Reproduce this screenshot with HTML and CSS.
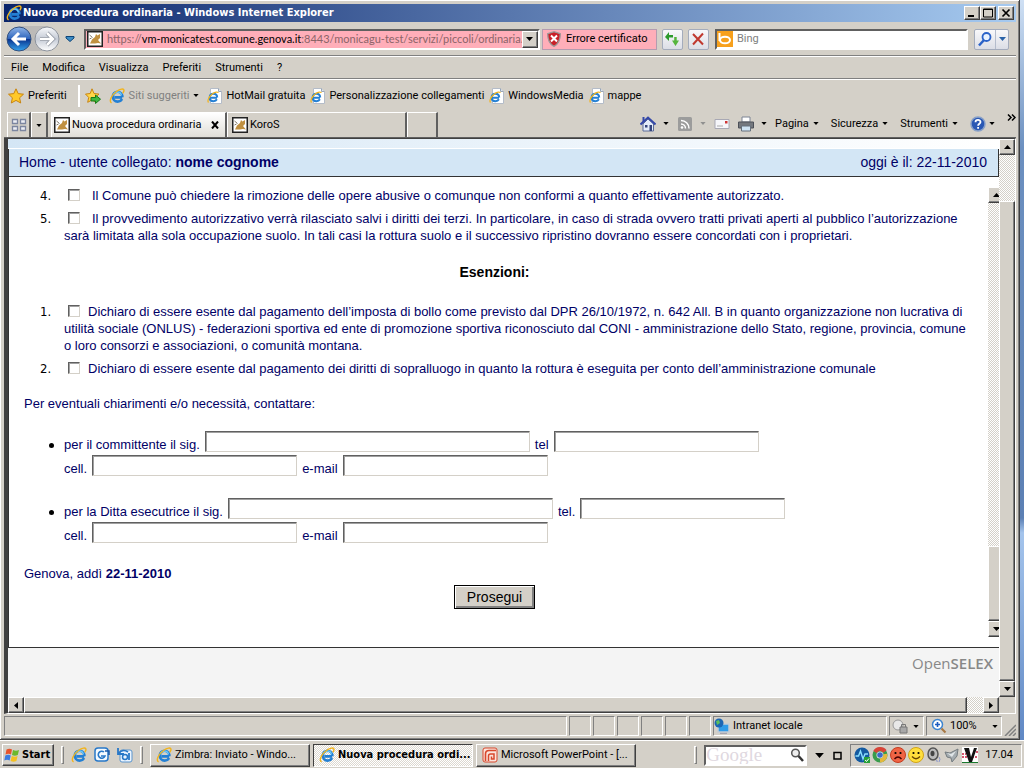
FILE: index.html
```html
<!DOCTYPE html>
<html lang="it">
<head>
<meta charset="utf-8">
<title>Nuova procedura ordinaria</title>
<link rel="stylesheet" href="styles.css">
</head>
<body>
<svg class="defs" aria-hidden="true">
  <symbol id="ie" viewBox="0 0 16 16">
    <path d="M13.200 9.400H5.400M13.400 9.200C13.400 5.900 11.400 3.800 8.600 3.800S3.800 6 3.800 8.700s2 4.900 4.800 4.900c2.100 0 3.600-1 4.400-2.600" fill="none" stroke="#2480d4" stroke-width="2.600"/>
    <path d="M12.400 7.400C12 5.400 10.600 4 8.600 4S5 5.200 4.400 7.200" fill="none" stroke="#6cc8f8" stroke-width="1.400"/>
    <path d="M2.600 14.800C-.6 13.400 2.600 7 7.500 3.500 11 .9 14.800.2 15 2.300c.1 1-.5 2-1.200 2.900" fill="none" stroke="#f2b41c" stroke-width="1.400"/>
  </symbol>
  <symbol id="iepage" viewBox="0 0 16 16">
    <path d="M3.500.5h8l3 3v12h-11z" fill="#fff" stroke="#b4bcc8"/><path d="M11.500.5v3h3" fill="#dde6f0" stroke="#9aa6b4"/>
    <path d="M10 9.700H3.500M10.200 9.500C10.200 7 8.500 5.800 6.400 5.800S2.700 7.300 2.700 9.500s1.500 3.700 3.700 3.700c1.600 0 2.900-.7 3.500-1.900" fill="none" stroke="#2480d4" stroke-width="2"/>
    <path d="M1.500 14.500C0 13 2 8.500 5.500 5.800 8.300 3.800 11 3.400 11.200 5" fill="none" stroke="#f2b41c" stroke-width="1.200"/>
  </symbol>
  <symbol id="cat" viewBox="0 0 16 16">
    <path d="M.75.75h14.500v14.500H.75z" fill="#fff" stroke="#222" stroke-width="1.500"/>
    <path d="M3 12.500l2-4 3-2.500 1-3 1.500 1.500L13 3v4l-2 2 3 3.500-3-.5-3 .5z" fill="#c09040"/><path d="M2.500 4l3 2.500M2.500 8l2-1" stroke="#807868" fill="none"/>
  </symbol>
  <symbol id="down" viewBox="0 0 7 4"><path d="M0 0h7L3.500 4z" fill="currentColor"/></symbol>
</svg>
<div class="desktop">
<div class="window">
  <header class="titlebar">
    <svg class="i16"><use href="#ie"/></svg>
    <h1>Nuova procedura ordinaria - Windows Internet Explorer</h1>
    <div class="winbtns">
      <button class="raised" aria-label="Riduci"><svg viewBox="0 0 12 10"><path d="M2 7h6v2H2z"/></svg></button>
      <button class="raised" aria-label="Ripristina"><svg viewBox="0 0 12 10"><path d="M1.500 1h9v8h-9zM1 1.500h10" fill="none" stroke="#000"/></svg></button>
      <button class="raised close" aria-label="Chiudi"><svg viewBox="0 0 12 10"><path d="M2.500 1.500l7 7m0-7l-7 7" stroke="#000" stroke-width="1.700"/></svg></button>
    </div>
  </header>

  <div class="navrow">
    <div class="backfwd">
      <svg viewBox="0 0 54 28">
        <defs>
          <linearGradient id="gb" x1="0" y1="0" x2="0" y2="1"><stop offset="0" stop-color="#8fb4e8"/><stop offset=".48" stop-color="#2f66bd"/><stop offset=".52" stop-color="#0a3590"/><stop offset="1" stop-color="#35a4ee"/></linearGradient>
          <linearGradient id="gf" x1="0" y1="0" x2="0" y2="1"><stop offset="0" stop-color="#f8f9fb"/><stop offset=".5" stop-color="#c5cbd6"/><stop offset="1" stop-color="#fff"/></linearGradient>
        </defs>
        <path d="M13 1h28a13 13 0 0 1 0 25H13z" fill="#bcbab8"/>
        <circle cx="13" cy="14" r="12" fill="url(#gb)" stroke="#33507e"/>
        <circle cx="41" cy="14" r="12" fill="url(#gf)" stroke="#8c929c"/>
        <path d="M20 14H7m6-6l-6 6 6 6" fill="none" stroke="#fff" stroke-width="3"/>
        <path d="M34 14h13m-6-6l6 6-6 6" fill="none" stroke="#8a909c" stroke-width="4"/>
        <path d="M34 14h13m-6-6l6 6-6 6" fill="none" stroke="#fff" stroke-width="2.500"/>
      </svg>
    </div>
    <svg class="recent" viewBox="0 0 10 6"><path d="M1 .5h8v1.500L5 5.500 1 2z" fill="#3c8cc4" stroke="#0c4478"/></svg>
    <div class="address sunken">
      <svg class="i16"><use href="#cat"/></svg>
      <p>https://<b>vm-monicatest.comune.genova.it</b>:8443/monicagu-test/servizi/piccoli/ordinaria/p</p>
      <button class="raised combo" aria-label="Cronologia indirizzi"><svg class="dn"><use href="#down"/></svg></button>
    </div>
    <button class="cert">
      <svg class="i16" viewBox="0 0 16 16"><path d="M8 .7l6.300 2C14.300 9.500 12 13.300 8 15.300 4 13.300 1.700 9.500 1.700 2.700z" fill="#c91f28" stroke="#9a9a9a" stroke-width="1.300"/><path d="M5 4.500l6 6m0-6l-6 6" stroke="#fff" stroke-width="2"/></svg>
      Errore certificato
    </button>
    <button class="flat" aria-label="Aggiorna"><svg class="i16" viewBox="0 0 16 16"><path d="M1 6l4-5v3h4v2.500H5V10z" fill="#2c9a2c"/><path d="M15 9.500l-3.500 5.500-3.500-5.500h2.200V6h2.500v3.500z" fill="#55b53c"/></svg></button>
    <button class="flat" aria-label="Interrompi"><svg class="i16" viewBox="0 0 16 16"><path d="M3 3l10 10.500M13 2.500L3 13.500" stroke="#c0392f" stroke-width="2"/></svg></button>
    <label class="search sunken">
      <svg class="i16" viewBox="0 0 16 16"><path d="M0 0h16v16H0z" fill="#f7a01c"/><path d="M2.500 2v8" stroke="#fff" stroke-width="2"/><ellipse cx="8" cy="9" rx="5" ry="3.300" fill="none" stroke="#fff" stroke-width="2"/></svg>
      <input type="text" placeholder="Bing" aria-label="Cerca con Bing">
    </label>
    <div class="go">
      <button aria-label="Cerca"><svg class="i16" viewBox="0 0 16 16"><circle cx="9.500" cy="6" r="4" fill="#e8f2ff" stroke="#2a62c8" stroke-width="1.800"/><path d="M7 9l-5 5.500" stroke="#2a62c8" stroke-width="2.500"/></svg></button>
      <button aria-label="Opzioni di ricerca"><svg class="dn blue"><use href="#down"/></svg></button>
    </div>
  </div>

  <nav class="menu">
    <button>File</button><button>Modifica</button><button>Visualizza</button><button>Preferiti</button><button>Strumenti</button><button>?</button>
  </nav>

  <div class="favs">
    <button><svg class="i16" viewBox="0 0 16 16"><path d="M8 .8l2.200 4.800 5.300.6-3.900 3.600 1.100 5.200L8 12.400 3.300 15l1.100-5.200L.5 6.200l5.300-.6z" fill="#ffc928" stroke="#c88410"/></svg>Preferiti</button>
    <i class="vsep"></i>
    <button aria-label="Aggiungi"><svg class="i16" viewBox="0 0 16 16"><path d="M7 .8l2 4.700 5 .6-3.700 3.300 1 4.900L7 12l-4.300 2.300 1-4.900L.5 6.100l4.700-.6z" fill="#ffd648" stroke="#c88410"/><path d="M6 9.500h4.500V7l5 4.200-5 4.300V13H6z" fill="#3fb83f" stroke="#187818"/></svg></button>
    <button class="dim"><svg class="i16"><use href="#ie"/></svg>Siti suggeriti<svg class="dn sm dark"><use href="#down"/></svg></button>
    <a href="#hotmail"><svg class="i16"><use href="#iepage"/></svg>HotMail gratuita</a>
    <a href="#pers"><svg class="i16"><use href="#iepage"/></svg>Personalizzazione collegamenti</a>
    <a href="#media"><svg class="i16"><use href="#iepage"/></svg>WindowsMedia</a>
    <a href="#mappe"><svg class="i16"><use href="#iepage"/></svg>mappe</a>
  </div>

  <div class="tabs">
    <button class="tab quick" aria-label="Schede rapide"><svg class="i16" viewBox="0 0 16 16"><path d="M1.500 2.500h5v4h-5zM9.500 2.500h5v4h-5zM1.500 9.500h5v4h-5zM9.500 9.500h5v4h-5z" fill="#eceef4" stroke="#7c86a0" stroke-width="1.300"/></svg></button>
    <button class="tab drop" aria-label="Elenco schede"><svg class="dn sm"><use href="#down"/></svg></button>
    <div class="tab active"><svg class="i16"><use href="#cat"/></svg><span>Nuova procedura ordinaria</span><button aria-label="Chiudi scheda"><svg viewBox="0 0 8 8"><path d="M1 .5l6 7m0-7l-6 7" stroke="#000" stroke-width="2"/></svg></button></div>
    <div class="tab koros"><svg class="i16"><use href="#cat"/></svg><span>KoroS</span></div>
    <button class="tab new" aria-label="Nuova scheda"></button>
    <div class="cmds">
      <button aria-label="Home" class="ic"><svg class="i16" viewBox="0 0 16 16"><path d="M3 8v7h10.500V8L8 3z" fill="#e4ecfa" stroke="#5c6c98"/><path d="M.5 8.500L8 1.500l7.500 7" fill="none" stroke="#3448a8" stroke-width="2"/><path d="M2.500 1h2v4l-2 1.500z" fill="#3448a8"/><path d="M5 9h2.500v2.500H5zM9.500 9H12v6H9.500z" fill="#34447c"/></svg><svg class="dn sm"><use href="#down"/></svg></button>
      <button aria-label="Feed" class="ic off"><svg class="i16" viewBox="0 0 16 16"><rect x="1" y="1" width="14" height="14" rx="1.500" fill="#9c9c9c"/><path d="M4 8a4.500 4.500 0 0 1 4.500 4.500M4 4.500a8 8 0 0 1 8 8" fill="none" stroke="#fff" stroke-width="1.500"/><circle cx="5" cy="11.500" r="1.300" fill="#fff"/></svg><svg class="dn sm"><use href="#down"/></svg></button>
      <button aria-label="Posta" class="ic"><svg class="i16" viewBox="0 0 16 16"><path d="M1 3.500h14v9H1z" fill="#f6f6fa" stroke="#a8a8b4"/><path d="M11 5h2.500v2.500H11z" fill="#d03434"/><path d="M3 10h6" stroke="#aaa"/></svg></button>
      <button aria-label="Stampa" class="ic"><svg class="i16" viewBox="0 0 16 16"><path d="M4 1h8v5H4z" fill="#fff" stroke="#7c8494"/><path d="M.5 6h15v6H.5z" fill="#74787e" stroke="#4c5058"/><path d="M3.500 10h9v5h-9z" fill="#cfe4f4" stroke="#66707c"/></svg><svg class="dn sm"><use href="#down"/></svg></button>
      <button>Pagina<svg class="dn sm"><use href="#down"/></svg></button>
      <button>Sicurezza<svg class="dn sm"><use href="#down"/></svg></button>
      <button>Strumenti<svg class="dn sm"><use href="#down"/></svg></button>
      <button aria-label="Guida" class="help"><svg class="i16" viewBox="0 0 16 16"><circle cx="8" cy="8" r="7" fill="#2a58b4" stroke="#88a0c8" stroke-width="1.500"/><path d="M5.500 6.200C5.500 3.200 10.500 3.200 10.500 6c0 1.800-2.400 1.800-2.400 3.800M8.100 11v1.800" fill="none" stroke="#fff" stroke-width="1.800"/></svg><svg class="dn sm"><use href="#down"/></svg></button>
      <button class="more" aria-label="Altri comandi"><svg viewBox="0 0 9 7"><path d="M1 .5l3 3-3 3M5 .5l3 3-3 3" fill="none" stroke="#000" stroke-width="1.500"/></svg></button>
    </div>
  </div>

  <div class="view">
    <div class="page">
      <div class="strip"></div>
      <div class="userbar"><p>Home - utente collegato: <strong>nome cognome</strong></p><p>oggi è il: 22-11-2010</p></div>
      <div class="panel">
        <form class="form">
          <ol class="clauses" style="counter-reset:n 3">
            <li><label class="wide"><input type="checkbox">Il Comune può chiedere la rimozione delle opere abusive o comunque non conformi a quanto effettivamente autorizzato.</label></li>
            <li><label class="wide"><input type="checkbox">Il provvedimento autorizzativo verrà rilasciato salvi i diritti dei terzi. In particolare, in caso di strada ovvero tratti privati aperti al pubblico l’autorizzazione<br>sarà limitata alla sola occupazione suolo. In tali casi la rottura suolo e il successivo ripristino dovranno essere concordati con i proprietari.</label></li>
          </ol>
          <h2>Esenzioni:</h2>
          <ol class="clauses" style="counter-reset:n 0">
            <li><label><input type="checkbox">Dichiaro di essere esente dal pagamento dell’imposta di bollo come previsto dal DPR 26/10/1972, n. 642 All. B in quanto organizzazione non lucrativa di<br>utilità sociale (ONLUS) - federazioni sportiva ed ente di promozione sportiva riconosciuto dal CONI - amministrazione dello Stato, regione, provincia, comune<br>o loro consorzi e associazioni, o comunità montana.</label></li>
            <li><label><input type="checkbox">Dichiaro di essere esente dal pagamento dei diritti di sopralluogo in quanto la rottura è eseguita per conto dell’amministrazione comunale</label></li>
          </ol>
          <p class="note">Per eventuali chiarimenti e/o necessità, contattare:</p>
          <ul class="contacts">
            <li>
              <div><label for="c1">per il committente il sig.</label><input id="c1" class="long" type="text"><label for="c2">tel</label><input id="c2" type="text"></div>
              <div><label for="c3">cell.</label><input id="c3" type="text"><label for="c4">e-mail</label><input id="c4" type="text"></div>
            </li>
            <li>
              <div><label for="d1">per la Ditta esecutrice il sig.</label><input id="d1" class="long" type="text"><label for="d2">tel.</label><input id="d2" type="text"></div>
              <div><label for="d3">cell.</label><input id="d3" type="text"><label for="d4">e-mail</label><input id="d4" type="text"></div>
            </li>
          </ul>
          <p class="note">Genova, addì <strong>22-11-2010</strong></p>
          <button type="button" class="submit">Prosegui</button>
        </form>
        <div class="innerscroll">
          <div class="raised sb"><svg class="up" viewBox="0 0 7 4"><path d="M0 4h7L3.500 0z"/></svg></div>
          <div class="track"></div>
          <div class="raised thumb"></div>
          <div class="raised sb"><svg class="up"><use href="#down"/></svg></div>
        </div>
      </div>
      <footer>Open<b>SELEX</b></footer>
    </div>
    <div class="vscroll">
      <div class="raised sb"><svg class="up" viewBox="0 0 7 4"><path d="M0 4h7L3.500 0z"/></svg></div>
      <div class="track"></div>
      <div class="raised thumb"></div>
      <div class="raised sb"><svg class="up"><use href="#down"/></svg></div>
    </div>
    <div class="hscroll">
      <div class="raised sb"><svg class="side" viewBox="0 0 4 7"><path d="M4 0v7L0 3.500z"/></svg></div>
      <div class="raised thumb"></div>
      <div class="track"></div>
      <div class="raised sb"><svg class="side" viewBox="0 0 4 7"><path d="M0 0v7l4-3.500z"/></svg></div>
    </div>
    <div class="corner"></div>
  </div>

  <div class="status">
    <div class="grow"></div><div class="cell"></div><div class="cell"></div><div class="cell"></div><div class="cell"></div><div class="cell"></div><div class="cell"></div>
    <div class="zone"><svg class="i16" viewBox="0 0 16 16"><path d="M4 6h11v8H4z" fill="#2f9be8" stroke="#c4ccd6" stroke-width="1.500"/><circle cx="5" cy="5" r="4.500" fill="#1c66b4"/><path d="M2 3l3-1 1 3-3 2z" fill="#5cc05c"/><path d="M6 15.300h7" stroke="#99a"/></svg>Intranet locale</div>
    <div class="prot"><svg class="i16" viewBox="0 0 16 16"><circle cx="6" cy="7" r="5" fill="#e8e8e8" stroke="#999"/><path d="M8 9h7v6H8z" fill="#a8a8a8" stroke="#777"/><path d="M9.500 9V6.500h4V9" fill="none" stroke="#777"/></svg><svg class="dn sm"><use href="#down"/></svg></div>
    <div class="zoom"><svg class="i16" viewBox="0 0 16 16"><circle cx="6.500" cy="6.500" r="5" fill="#fff" stroke="#3c84d0" stroke-width="1.500"/><path d="M6.500 4v5M4 6.500h5" stroke="#1c5cc0" stroke-width="1.600"/><path d="M10.500 10.500l4 4" stroke="#a87844" stroke-width="2.200"/></svg><span>100%</span><svg class="dn sm"><use href="#down"/></svg></div>
    <svg class="grip" viewBox="0 0 12 12"><path d="M1 12L12 1M5 12l7-7M9 12l3-3" stroke="#808080" stroke-width="1.500"/></svg>
  </div>
</div>
<div class="behind"></div>
</div>

<footer class="taskbar">
  <button class="raised start"><svg class="i16" viewBox="0 0 16 16"><path d="M2.500 2.500q3-1.500 5.500 0l-1 5q-2.500-1.500-5.500 0z" fill="#e8542c"/><path d="M9 3q3 1.500 6 0l-1.200 5q-3 1.500-5.800 0z" fill="#6cb82c"/><path d="M1.300 8.500q3-1.500 5.500 0l-1.200 5q-2.500-1.500-5.300 0z" fill="#3c7ce0"/><path d="M7.800 9q3 1.500 5.800 0l-1.200 5q-3 1.500-5.800 0z" fill="#f4c020"/></svg>Start</button>
  <i class="grabber"></i>
  <div class="quicklaunch">
    <svg class="i16"><use href="#ie"/></svg>
    <svg class="i16" viewBox="0 0 16 16"><rect x="1" y="1" width="13" height="13" rx="3" fill="#f4faff" stroke="#2878c8" stroke-width="1.500"/><path d="M10 5a3.500 3.500 0 1 0 1 4H7" fill="none" stroke="#2878c8" stroke-width="1.600"/><path d="M11 4h4v4" fill="none" stroke="#1858a8" stroke-width="1.500"/></svg>
    <svg class="i16" viewBox="0 0 16 16"><rect x="3" y="3" width="12" height="12" rx="2" fill="#eaf4ff" stroke="#5a94cc"/><path d="M1 1v6h6M1.500 6.500C4 3 8 3 11 5" fill="none" stroke="#2878c8" stroke-width="1.800"/><circle cx="8" cy="10" r="2.500" fill="none" stroke="#2878c8" stroke-width="1.500"/><path d="M12 6v7" stroke="#2878c8" stroke-width="1.800"/></svg>
  </div>
  <i class="grabber"></i>
  <div class="tasks">
    <button class="raised"><svg class="i16"><use href="#ie"/></svg>Zimbra: Inviato - Windo...</button>
    <button class="pressed"><svg class="i16"><use href="#ie"/></svg>Nuova procedura ordi...</button>
    <button class="raised"><svg class="i16" viewBox="0 0 16 16"><rect x="1" y="1" width="14" height="14" rx="2" fill="#fbe4dc" stroke="#d8482c"/><path d="M3.500 14V7q0-3.500 3.500-3.500h7" fill="none" stroke="#d8482c" stroke-width="1.600"/><path d="M6.500 14V9q0-2 2-2H12v5H9.500V9.500" fill="none" stroke="#d8482c" stroke-width="1.500"/></svg>Microsoft PowerPoint - [...</button>
  </div>
  <i class="grabber"></i>
  <label class="google sunken"><input type="text" placeholder="Google" aria-label="Google"><svg class="i16" viewBox="0 0 16 16"><circle cx="6.500" cy="6" r="3.800" fill="#eee" stroke="#555" stroke-width="1.500"/><path d="M9.500 9l4.500 5" stroke="#333" stroke-width="2.500"/></svg></label>
  <svg class="dn big"><use href="#down"/></svg>
  <svg class="sq" viewBox="0 0 9 9"><path d="M1 1.500h7V8H1z" fill="none" stroke="#000" stroke-width="1.500"/></svg>
  <div class="tray">
    <svg class="i16" viewBox="0 0 16 16"><circle cx="8" cy="8" r="7.500" fill="#145aa0"/><path d="M1.500 9h3l2-5 2.500 8 2-5h3" fill="none" stroke="#8ce0ff" stroke-width="1.400"/><path d="M10 10h6v6h-6z" fill="#28a038"/><path d="M11.200 13l1.300 1.500L15 11.500" fill="none" stroke="#fff"/></svg>
    <svg class="i16" viewBox="0 0 16 16"><circle cx="8" cy="8" r="5.500" fill="#eee" stroke="#3a9c4c" stroke-width="4"/><path d="M3 5a6 6 0 0 1 10-.5" fill="none" stroke="#d84438" stroke-width="4"/><path d="M13.300 7A5.500 5.500 0 0 1 8 13.500" fill="none" stroke="#e4b83c" stroke-width="4"/><circle cx="8" cy="8" r="2.800" fill="#3c6cc4"/></svg>
    <svg class="i16" viewBox="0 0 16 16"><circle cx="8" cy="8" r="7.500" fill="#f06444" stroke="#c43c20"/><circle cx="5.500" cy="6" r="1.100"/><circle cx="10.500" cy="6" r="1.100"/><path d="M4.500 12q3.500-4 7 0" fill="none" stroke="#400" stroke-width="1.300"/></svg>
    <svg class="i16" viewBox="0 0 16 16"><circle cx="8" cy="8" r="7.500" fill="#ffdf3c" stroke="#d0a418"/><circle cx="5.500" cy="6" r="1.100"/><circle cx="10.500" cy="6" r="1.100"/><path d="M4 9.500q4 4.500 8 0" fill="none" stroke="#640" stroke-width="1.300"/></svg>
    <svg class="i16" viewBox="0 0 16 16"><ellipse cx="7" cy="7" rx="5" ry="6" fill="#bbb" stroke="#555" stroke-width="1.500"/><ellipse cx="6.500" cy="6.500" rx="2" ry="2.800" fill="#444"/><path d="M13 10q2 2 0 5M10 13q2 .5 1 2" fill="none" stroke="#8c98cc"/></svg>
    <svg class="i16" viewBox="0 0 16 16"><path d="M1 5l5 1 8-4-1 7-5 6-1-4-4-1z" fill="#a4acb0" stroke="#747c80"/><path d="M3 6l4 1 5-3-4 6z" fill="#e0e6e8"/></svg>
    <svg class="i16" viewBox="0 0 16 16"><path d="M0 0h16v16H0z" fill="#fff"/><path d="M0 7h4M11 5h5M0 10h5M10 10h6" stroke="#c82040" stroke-width="1.400" stroke-dasharray="2 1"/><path d="M2 1h5l2 9 3-9h3l-5 14H7z" fill="#111"/><path d="M0 15.500h16" stroke="#18782c"/></svg>
    <time>17.04</time>
  </div>
</footer>
</body>
</html>
```
FILE: styles.css
```css
* { box-sizing: border-box; }
html, body { height: 100%; }
body {
  margin: 0;
  display: flex;
  flex-direction: column;
  background: #d4d0c8;
  color: #000;
  font: 11px/14px Roboto, "DejaVu Sans Condensed", sans-serif;
  overflow: hidden;
}
h1, h2, p, ol, ul { margin: 0; padding: 0; font-size: inherit; font-weight: inherit; }
button {
  display: flex;
  align-items: center;
  gap: 4px;
  margin: 0;
  padding: 0;
  border: 0;
  background: none;
  color: inherit;
  font: inherit;
  white-space: nowrap;
}
a { display: flex; align-items: center; gap: 3px; color: inherit; text-decoration: none; white-space: nowrap; }
input { min-width: 0; border: 0; outline: 0; font: inherit; background: none; padding: 0; }
svg { display: block; flex: none; }
.defs { position: absolute; width: 0; height: 0; }
.i16 { width: 16px; height: 16px; }
.dn { width: 7px; height: 4px; }
.dn.sm { width: 6px; height: 3px; }
.dn.big { width: 9px; height: 5px; }
.dn.blue { color: #2a62a8; }
.dn.dark { color: #000; }
.raised {
  background: #d4d0c8;
  color: #000;
  border: 1px solid;
  border-color: #fff #404040 #404040 #fff;
  box-shadow: inset -1px -1px #808080;
}
.sunken {
  background: #fff;
  border: 2px solid;
  border-color: #606060 #fff #fff #606060;
}
.desktop { flex: 1; min-height: 0; display: flex; }
.behind { width: 4px; background: linear-gradient(#cfe0f4, #6c90c0 20%, #5c80b4 70%, #a4c4ec 72%, #6088c4); }
.window {
  flex: 1;
  min-width: 0;
  display: flex;
  flex-direction: column;
  padding: 4px 3px 3px 4px;
  border: solid;
  border-width: 0 1px 1px 0;
  border-color: #404040;
  box-shadow: inset 1px 1px #fff, inset -1px -1px #808080;
}

.titlebar {
  height: 18px;
  display: flex;
  align-items: center;
  padding: 0 2px;
  background: linear-gradient(90deg, #0a246a, #a6caf0);
  color: #fff;
}
.titlebar h1, .start, .pressed { font-family: "DejaVu Sans Condensed", sans-serif; font-weight: bold; }
.titlebar h1 { flex: 1; padding-left: 1px; }
.winbtns { display: flex; }
.winbtns button { width: 16px; height: 14px; justify-content: center; }
.winbtns .close { margin-left: 2px; }
.winbtns svg { width: 12px; height: 10px; }

.navrow { height: 34px; display: flex; align-items: center; padding: 0 7px 0 2px; }
.backfwd svg { width: 54px; height: 28px; }
.recent { width: 10px; height: 6px; margin: 0 9px 0 5px; }
.address { flex: 458; height: 21px; display: flex; align-items: center; gap: 4px; background: #ffaeb9; color: #8c6468; min-width: 0; padding-left: 1px; font-family: Lato, sans-serif; }
.address p { flex: 1; min-width: 0; white-space: nowrap; }
.address b { color: #000; font-weight: normal; }
.combo { width: 16px; height: 17px; justify-content: center; }
.cert { width: 115px; height: 21px; margin: 0 5px 0 2px; padding-left: 3px; background: #ffaeb9; border: 1px solid #b49cb0; }
.flat, .go { height: 21px; background: linear-gradient(#f8f8fa, #dcdee6); border: 1px solid #a4acbc; border-radius: 2px; }
.flat { width: 21px; justify-content: center; margin-right: 5px; }
.search { flex: 253; height: 21px; display: flex; align-items: center; gap: 4px; margin: 0 6px 0 1px; }
.search input { flex: 1; }
.search input::placeholder { color: #808080; opacity: 1; }
.go { display: flex; }
.go button { width: 20px; justify-content: center; }
.go button + button { width: 13px; border-left: 1px solid #b4bccc; }

.menu { height: 23px; display: flex; align-items: center; gap: 14px; padding-left: 7px; border: solid #fff; border-width: 1px 0 0; box-shadow: 0 -1px #808080, 0 1px #fff, inset 0 -1px #808080; }

.favs { height: 33px; display: flex; align-items: center; padding-left: 4px; }
.favs button { margin-right: 8px; }
.favs a { margin-right: 5px; }
.favs .dim { color: #808080; }
.vsep { width: 2px; height: 22px; margin: 0 5px 0 3px; border: solid; border-width: 0 1px; border-color: #808080 #fff; }

.tabs { height: 26px; display: flex; align-items: flex-end; border-bottom: 1px solid #606060; padding-left: 3px; }
.tab { height: 25px; display: flex; align-items: center; gap: 2px; border: solid; border-width: 1px 2px 0 1px; border-color: #fff #606060 #606060 #fff; white-space: nowrap; }
.quick { width: 24px; justify-content: center; }
.drop { width: 17px; justify-content: center; margin-right: 3px; }
.active { width: 176px; background: linear-gradient(#fff, #e0ded8); padding: 0 6px 0 2px; }
.active span { flex: 1; }
.active svg[viewBox] { width: 8px; height: 8px; }
.koros { width: 180px; padding-left: 4px; }
.new { width: 31px; }
.cmds { flex: 1; display: flex; align-items: center; justify-content: flex-end; gap: 12px; height: 27px; }
.cmds .ic { margin-right: -4px; }
.cmds .ic .sm { margin-left: 3px; }
.cmds .off { color: #909090; }
.cmds .help { gap: 3px; }
.more { align-self: flex-start; padding-top: 4px; }
.more svg { width: 9px; height: 7px; }

.view {
  flex: 1;
  min-height: 0;
  display: grid;
  grid-template: 1fr 16px / 1fr 16px;
  border: 1px solid #404040;
  border-color: #404040 #fff #fff #404040;
  border-width: 1px 1px 1px 4px;
}
.track { background: repeating-conic-gradient(#fff 0 25%, #d4d0c8 0 50%) 0 0 / 2px 2px; }
.sb { width: 16px; height: 16px; display: flex; align-items: center; justify-content: center; flex: none; }
.up { width: 7px; height: 4px; }
.side { width: 4px; height: 7px; }
.vscroll, .innerscroll { display: flex; flex-direction: column; }
.vscroll .track { flex: 46; }
.vscroll .thumb { flex: 480; }
.hscroll { display: flex; }
.hscroll .thumb { flex: 944; }
.hscroll .track { flex: 16; }
.corner { background: #d4d0c8; }

.page {
  min-width: 0;
  display: flex;
  flex-direction: column;
  background: #f4f4f4;
  color: #000066;
  font: 13px/17px "Liberation Sans", Arial, sans-serif;
  overflow: hidden;
}
.strip { height: 10px; background: linear-gradient(90deg, #d4e6f5, #fff); border-bottom: 1px solid #fff; }
.userbar { height: 28px; display: flex; align-items: center; justify-content: space-between; padding: 0 11px 0 10px; background: #d3e6f5; border: solid #333; border-width: 0 1px 1px; font-size: 14px; }
.panel { flex: 1; min-height: 0; display: flex; background: #fff; border: solid #333; border-width: 0 0 1px 1px; }
.form { flex: 1; min-width: 0; padding: 10px 8px 0 0; }
.clauses { list-style: none; padding-left: 31px; }
.clauses li { display: grid; grid-template-columns: 24px 1fr; counter-increment: n; margin-bottom: 6px; white-space: nowrap; }
.clauses li::before { content: counter(n) "."; color: #000; font-family: "DejaVu Sans Condensed", sans-serif; }
.clauses input, .contacts input {
  background: #fff;
  border: 1px solid;
  border-color: #606060 #d4d0c8 #d4d0c8 #606060;
  box-shadow: inset 1px 1px #a0a0a0;
}
.clauses input { appearance: none; width: 12px; height: 12px; margin: 0 8px 0 4px; vertical-align: -1px; }
.clauses .wide input { margin-right: 12px; }
.form h2 { padding: 12px 0 21px; text-align: center; color: #000; font-size: 14px; font-weight: bold; line-height: 20px; }
.note { padding-left: 15px; }
.clauses + .note { padding-top: 12px; }
.contacts { list-style: none; padding: 18px 0 1px 55px; }
.contacts li { position: relative; margin-bottom: 19px; }
.contacts li::before { content: ""; position: absolute; left: -15px; top: 13px; width: 5px; height: 5px; border-radius: 50%; background: #000; }
.contacts div { display: flex; align-items: flex-end; gap: 5px; height: 24px; padding-bottom: 2px; }
.contacts label { line-height: 15px; }
.contacts input { width: 205px; height: 21px; }
.contacts .long { width: 325px; }
.submit { margin: 3px auto 0; height: 24px; width: 81px; justify-content: center; background: #d4d0c8; color: #000; border: 1px solid #000; box-shadow: inset 1px 1px #fff, inset -2px -2px #808080; font-size: 14px; }
.innerscroll { width: 11px; overflow: hidden; padding: 10px 0; }
.innerscroll .track { flex: 345; }
.innerscroll .thumb { flex: 73; width: 16px; }
.page footer { height: 49px; padding: 6px 6px 0 0; text-align: right; color: #888; font: 15px/18px "Open Sans", sans-serif; }
.page footer b { font-weight: 600; }

.status { height: 20px; margin-top: 2px; display: flex; gap: 2px; align-items: stretch; }
.status div { display: flex; align-items: center; gap: 3px; border: 1px solid; border-color: #808080 #fff #fff #808080; }
.status .grow { flex: 1; }
.status .cell { width: 22px; }
.status .zone { width: 174px; }
.status .prot { width: 35px; padding-left: 2px; gap: 5px; }
.status .zoom { width: 76px; padding-left: 4px; }
.status .zoom span { flex: 1; }
.status .zoom .sm { margin-right: 3px; }
.grip { width: 12px; height: 12px; align-self: flex-end; }

.taskbar { height: 28px; display: flex; align-items: center; padding: 1px 2px 0; border-top: 1px solid #fff; }
.start { width: 52px; height: 22px; gap: 2px; padding-left: 1px; }
.grabber { width: 3px; height: 18px; margin: 0 7px; border: 1px solid; border-color: #fff #808080 #808080 #fff; }
.quicklaunch { display: flex; gap: 7px; }
.tasks { flex: 1; display: flex; gap: 3px; min-width: 0; }
.tasks button { width: 160px; height: 23px; padding-left: 5px; gap: 3px; }
.pressed { border: 1px solid; border-color: #404040 #fff #fff #404040; background: repeating-conic-gradient(#fff 0 25%, #dcd8d0 0 50%) 0 0 / 2px 2px; }
.google { width: 103px; height: 21px; display: flex; align-items: center; }
.google input { flex: 1; font: 19px/17px "Liberation Serif", serif; height: 17px; }
.google input::placeholder { color: #e0d8e0; opacity: 1; }
.big { margin: 0 9px 0 8px; }
.sq { width: 9px; height: 9px; margin-right: 8px; }
.tray { height: 23px; display: flex; align-items: center; gap: 2px; padding: 0 8px 0 3px; border: 1px solid; border-color: #808080 #fff #fff #808080; }
.tray time { padding-left: 5px; }
```
